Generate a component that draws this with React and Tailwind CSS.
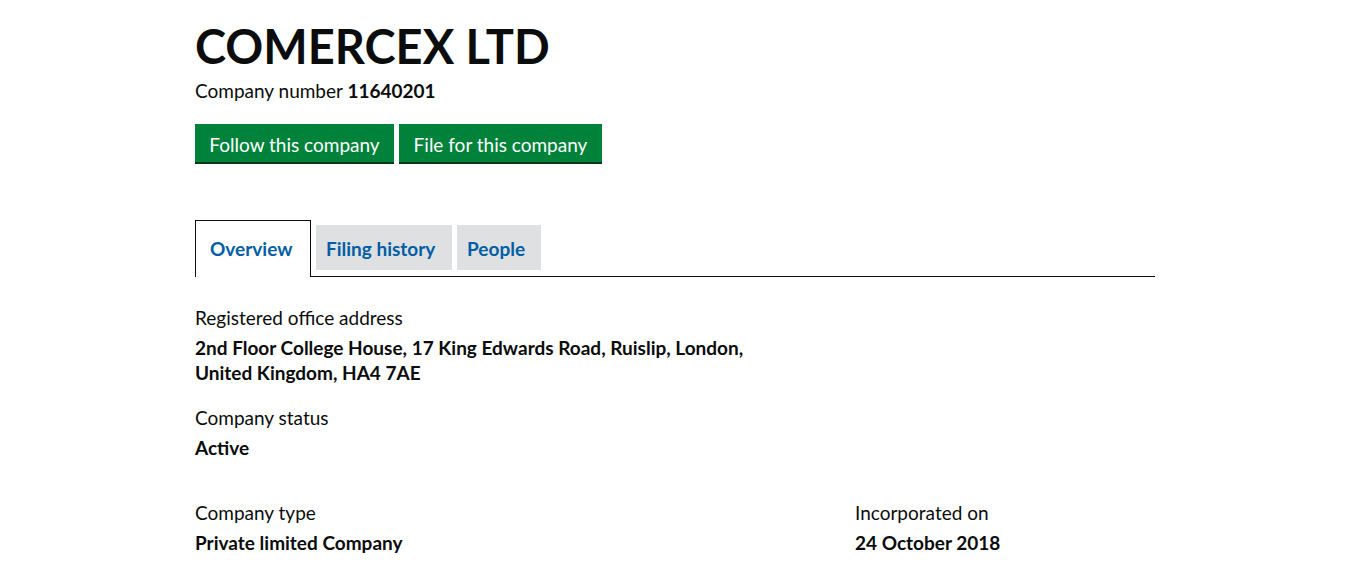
export default function App() {
  const font = { fontFamily: 'Lato, "Liberation Sans", Arial, sans-serif' };
  return (
    <div className="min-h-[579px] bg-white text-[#0b0c0c]" style={font}>
      <div className="ml-[195px] w-[960px]">
        <h1 className="pt-[22px] text-[47px] leading-[48px] font-bold">COMERCEX LTD</h1>
        <p className="mt-[8px] text-[19px] leading-[25px]">
          Company number <strong className="font-bold">11640201</strong>
        </p>
        <div className="mt-[21px] flex gap-[5px]">
          <button className="h-[38px] w-[199px] bg-[#00823b] pt-[4px] text-white text-[19px] leading-[34px] shadow-[0_2px_0_#003618]">
            Follow this company
          </button>
          <button className="h-[38px] w-[203px] bg-[#00823b] pt-[4px] text-white text-[19px] leading-[34px] shadow-[0_2px_0_#003618]">
            File for this company
          </button>
        </div>
        <div className="mt-[58px] flex items-start border-b border-[#0b0c0c]">
          <div className="-mb-px h-[57px] w-[116px] border border-b-0 border-[#0b0c0c] bg-white pl-[14px] text-[19px] leading-[56px] font-bold text-[#005ea5]">
            Overview
          </div>
          <div className="ml-[5px] mt-[5px] h-[45px] w-[136px] bg-[#dee0e2] pl-[10px] text-[19px] leading-[47px] font-bold text-[#005ea5]">
            Filing history
          </div>
          <div className="ml-[5px] mt-[5px] h-[45px] w-[84px] bg-[#dee0e2] pl-[10px] text-[19px] leading-[47px] font-bold text-[#005ea5]">
            People
          </div>
        </div>
        <dl className="mt-[28px] text-[19px] leading-[25px]">
          <dt>Registered office address</dt>
          <dd className="mt-[5px] font-bold">
            2nd Floor College House, 17 King Edwards Road, Ruislip, London,
            <br />
            United Kingdom, HA4 7AE
          </dd>
          <dt className="mt-[20px]">Company status</dt>
          <dd className="mt-[5px] font-bold">Active</dd>
        </dl>
        <div className="mt-[40px] flex text-[19px] leading-[25px]">
          <dl className="w-[660px]">
            <dt>Company type</dt>
            <dd className="mt-[5px] font-bold">Private limited Company</dd>
          </dl>
          <dl>
            <dt>Incorporated on</dt>
            <dd className="mt-[5px] font-bold">24 October 2018</dd>
          </dl>
        </div>
      </div>
    </div>
  );
}
